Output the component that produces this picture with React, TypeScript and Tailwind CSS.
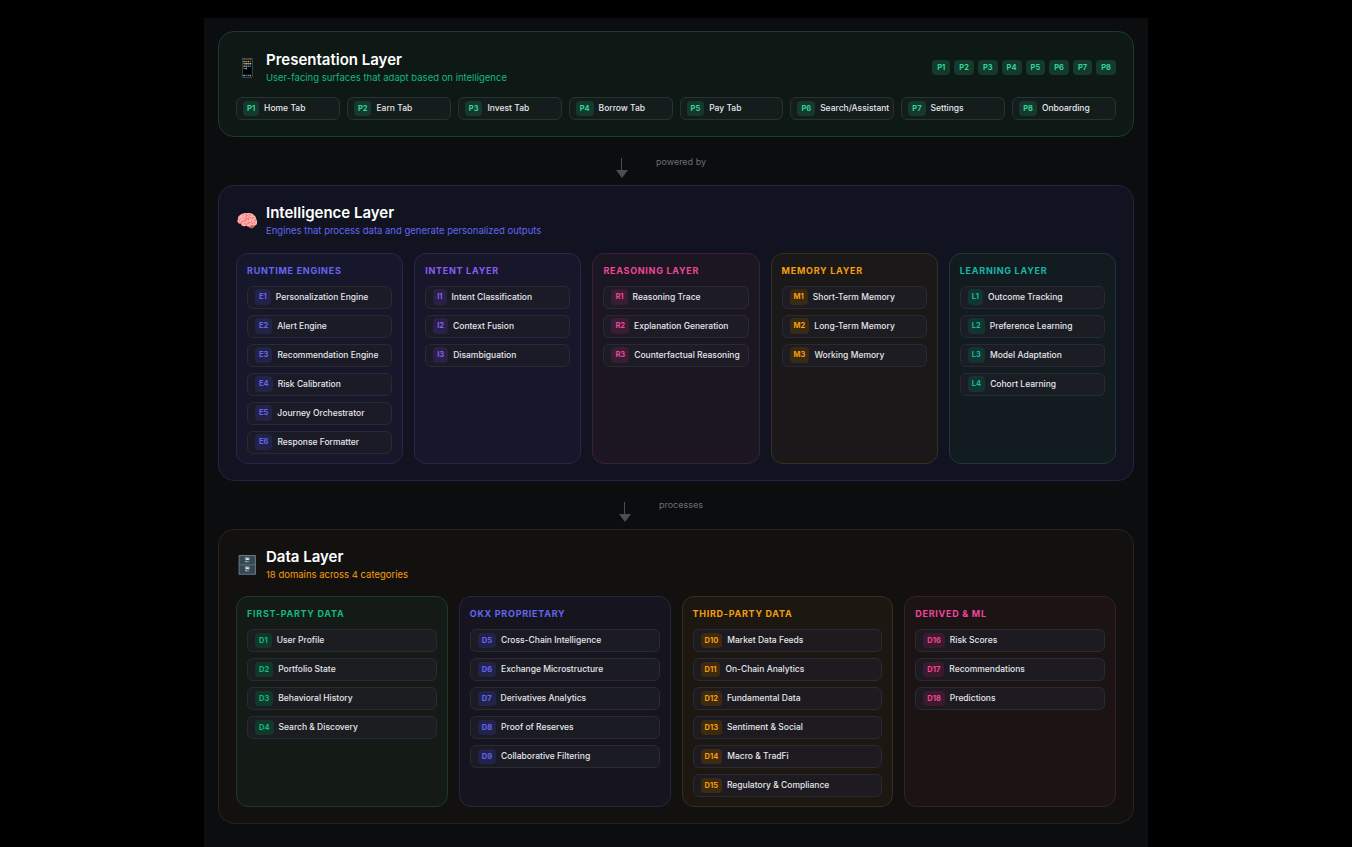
const tabs = ["Home Tab","Earn Tab","Invest Tab","Borrow Tab","Pay Tab","Search/Assistant","Settings","Onboarding"];

type Col = { title: string; color: string; badgeBg: string; colBg: string; colBorder: string; prefix: string; start: number; items: string[] };

const intel: Col[] = [
  { title: "RUNTIME ENGINES", color: "text-[#6366f1]", badgeBg: "bg-[#23234a]", colBg: "bg-[#16172a]", colBorder: "border-[#26284a]", prefix: "E", start: 1, items: ["Personalization Engine","Alert Engine","Recommendation Engine","Risk Calibration","Journey Orchestrator","Response Formatter"] },
  { title: "INTENT LAYER", color: "text-[#8b5cf6]", badgeBg: "bg-[#2a2147]", colBg: "bg-[#17162a]", colBorder: "border-[#2a2748]", prefix: "I", start: 1, items: ["Intent Classification","Context Fusion","Disambiguation"] },
  { title: "REASONING LAYER", color: "text-[#ec4899]", badgeBg: "bg-[#3a1d33]", colBg: "bg-[#1c1522]", colBorder: "border-[#3a2036]", prefix: "R", start: 1, items: ["Reasoning Trace","Explanation Generation","Counterfactual Reasoning"] },
  { title: "MEMORY LAYER", color: "text-[#f59e0b]", badgeBg: "bg-[#3a2a14]", colBg: "bg-[#1b1819]", colBorder: "border-[#38301f]", prefix: "M", start: 1, items: ["Short-Term Memory","Long-Term Memory","Working Memory"] },
  { title: "LEARNING LAYER", color: "text-[#14b8a6]", badgeBg: "bg-[#133530]", colBg: "bg-[#121c20]", colBorder: "border-[#1e3836]", prefix: "L", start: 1, items: ["Outcome Tracking","Preference Learning","Model Adaptation","Cohort Learning"] },
];

const data: Col[] = [
  { title: "FIRST-PARTY DATA", color: "text-[#10b981]", badgeBg: "bg-[#12382a]", colBg: "bg-[#141b17]", colBorder: "border-[#1d3a2c]", prefix: "D", start: 1, items: ["User Profile","Portfolio State","Behavioral History","Search & Discovery"] },
  { title: "OKX PROPRIETARY", color: "text-[#6366f1]", badgeBg: "bg-[#23234a]", colBg: "bg-[#16151f]", colBorder: "border-[#26263e]", prefix: "D", start: 5, items: ["Cross-Chain Intelligence","Exchange Microstructure","Derivatives Analytics","Proof of Reserves","Collaborative Filtering"] },
  { title: "THIRD-PARTY DATA", color: "text-[#f59e0b]", badgeBg: "bg-[#3d2a10]", colBg: "bg-[#1c1711]", colBorder: "border-[#3a2e18]", prefix: "D", start: 10, items: ["Market Data Feeds","On-Chain Analytics","Fundamental Data","Sentiment & Social","Macro & TradFi","Regulatory & Compliance"] },
  { title: "DERIVED & ML", color: "text-[#ec4899]", badgeBg: "bg-[#3a1a2c]", colBg: "bg-[#1c1315]", colBorder: "border-[#3a1f28]", prefix: "D", start: 16, items: ["Risk Scores","Recommendations","Predictions"] },
];

function Column({ c }: { c: Col }) {
  return (
    <div className={`flex-1 min-w-0 rounded-xl border ${c.colBorder} ${c.colBg} px-[10px] pt-[10px] pb-3 h-[211px]`}>
      <div className={`text-[9px] font-bold tracking-[0.08em] ${c.color} mb-[8px] leading-[14px]`}>{c.title}</div>
      <div className="flex flex-col gap-[6px]">
        {c.items.map((it, i) => (
          <div key={it} className="h-[23px] rounded-md border border-[#2a2a33] bg-[#1e1e26]/70 flex items-center px-[7px] gap-[5px] whitespace-nowrap overflow-hidden">
            <span className={`${c.badgeBg} ${c.color} text-[7.5px] font-bold rounded px-[4px] py-[2px]`}>{c.prefix}{c.start + i}</span>
            <span className="text-[8.5px] font-medium text-[#e5e7eb]">{it}</span>
          </div>
        ))}
      </div>
    </div>
  );
}

function Arrow({ label }: { label: string }) {
  return (
    <div className="h-12 flex items-center justify-center pt-[14px]">
      <div className="flex flex-col items-center ml-[-30px]">
        <div className="w-px h-[12px] bg-[#4b4d53]" />
        <div className="w-0 h-0 border-l-[6px] border-r-[6px] border-t-[8px] border-l-transparent border-r-transparent border-t-[#4b4d53]" />
      </div>
      <span className="text-[9px] text-[#6b6e76] ml-[28px] mb-[14px]">{label}</span>
    </div>
  );
}

export default function App() {
  return (
    <div className="min-h-[847px] bg-black flex justify-center" style={{ fontFamily: "Inter, 'Noto Sans', sans-serif" }}>
      <div className="w-[944px] bg-[#0c0d0f] mt-[18px] px-[14px] pt-[13px]">
        <div className="rounded-2xl border border-[#1c3a2f] bg-[#0e1815] px-[17px] pt-[18px] pb-[16px]">
          <div className="flex items-start justify-between">
            <div className="flex items-center gap-[10px]">
              <span className="text-[18px] w-[20px]">📱</span>
              <div>
                <div className="text-[15px] font-semibold text-white leading-5">Presentation Layer</div>
                <div className="text-[9.5px] text-[#10b981] mt-[1px]">User-facing surfaces that adapt based on intelligence</div>
              </div>
            </div>
            <div className="flex gap-[4px] mt-[10px]">
              {tabs.map((_, i) => (
                <span key={i} className="bg-[#143a2d] text-[#34d399] text-[7.5px] font-bold rounded px-[5px] py-[2px]">P{i + 1}</span>
              ))}
            </div>
          </div>
          <div className="grid grid-cols-8 gap-[7px] mt-[12px]">
            {tabs.map((t, i) => (
              <div key={t} className="h-[23px] rounded-md border border-[#243530] bg-[#141d1b] flex items-center px-[6px] gap-[5px] overflow-hidden">
                <span className="bg-[#143a2d] text-[#34d399] text-[7.5px] font-bold rounded px-[4px] py-[2px]">P{i + 1}</span>
                <span className="text-[8.5px] font-medium text-[#e5e7eb] whitespace-nowrap">{t}</span>
              </div>
            ))}
          </div>
        </div>

        <Arrow label="powered by" />

        <div className="rounded-2xl border border-[#232540] bg-[#111320] px-[17px] pt-[17px] pb-[16px]">
          <div className="flex items-center gap-[10px]">
            <span className="text-[18px] w-[20px]">🧠</span>
            <div>
              <div className="text-[15px] font-semibold text-white leading-5">Intelligence Layer</div>
              <div className="text-[9.5px] text-[#6366f1] mt-[1px]">Engines that process data and generate personalized outputs</div>
            </div>
          </div>
          <div className="flex gap-[11px] mt-[14px]">
            {intel.map((c) => <Column key={c.title} c={c} />)}
          </div>
        </div>

        <Arrow label="processes" />

        <div className="rounded-2xl border border-[#2c2318] bg-[#131110] px-[17px] pt-[17px] pb-[16px]">
          <div className="flex items-center gap-[10px]">
            <span className="text-[18px] w-[20px]">🗄️</span>
            <div>
              <div className="text-[15px] font-semibold text-white leading-5">Data Layer</div>
              <div className="text-[9.5px] text-[#f59e0b] mt-[1px]">18 domains across 4 categories</div>
            </div>
          </div>
          <div className="flex gap-[11px] mt-[14px]">
            {data.map((c) => <Column key={c.title} c={c} />)}
          </div>
        </div>
        <div className="h-5" />
      </div>
    </div>
  );
}
